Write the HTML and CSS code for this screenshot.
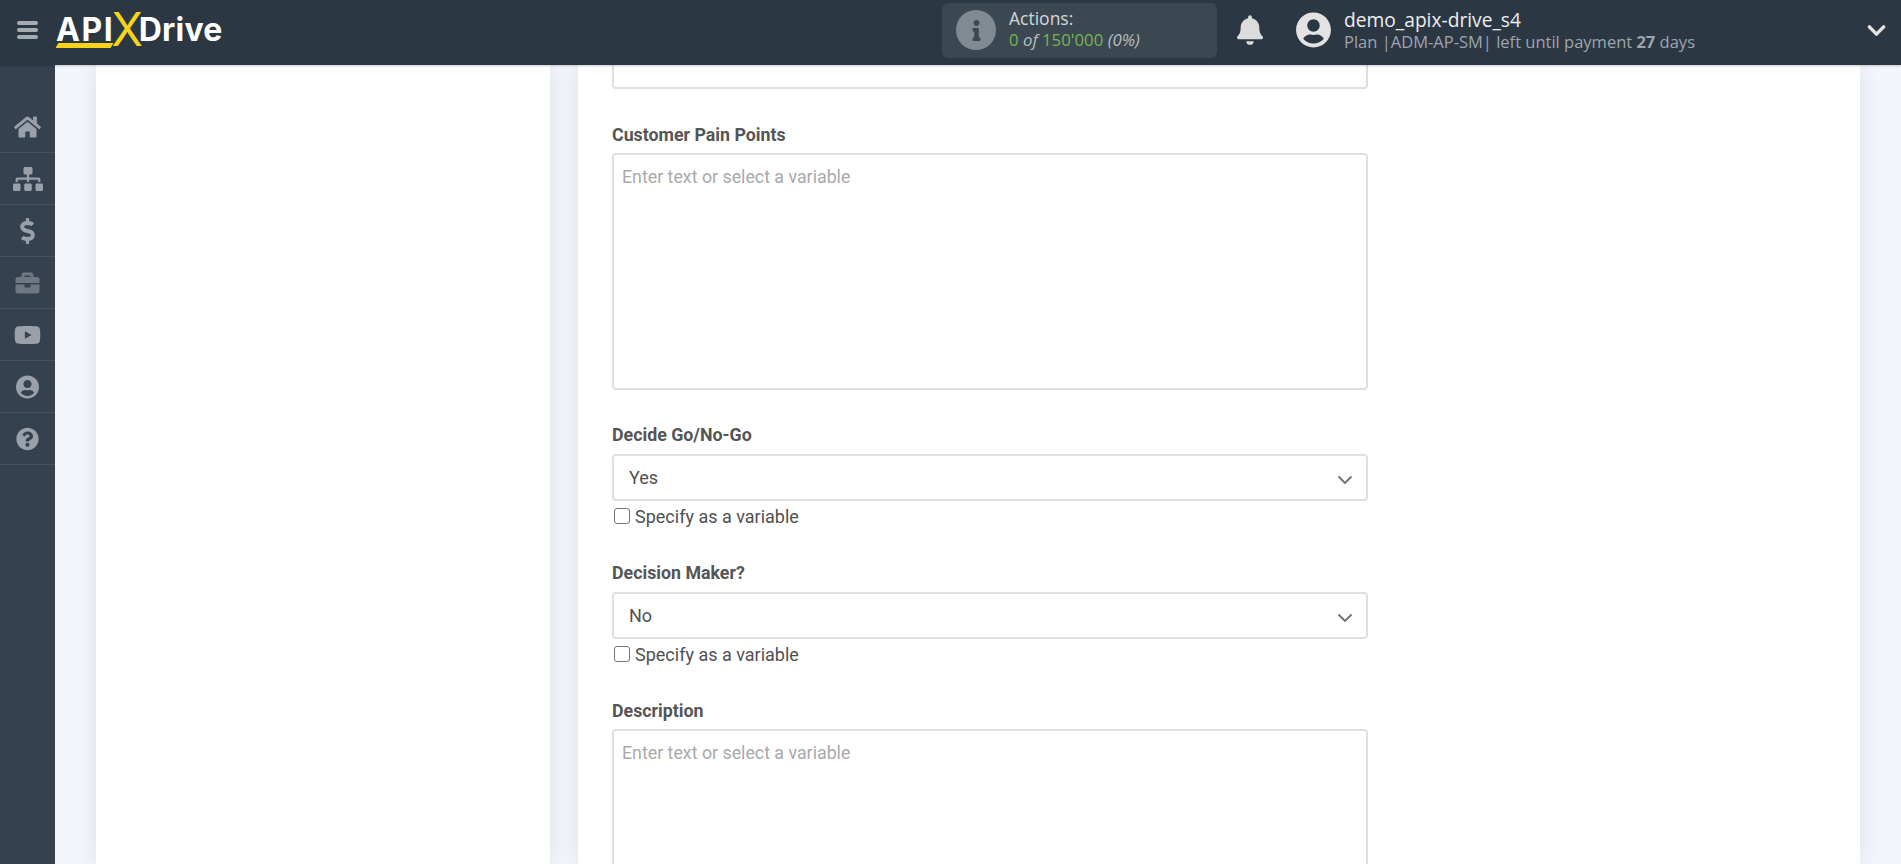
FILE: index.html
```html
<!DOCTYPE html>
<html lang="en">
<head>
  <meta charset="UTF-8">
  <title>ApiX-Drive</title>
  <link rel="stylesheet" href="styles.css">
</head>
<body>

  <header class="topbar">
    <div class="burger"><span></span><span></span><span></span></div>
    <div class="logo"><span class="logo-api">API</span><span class="logo-x">X</span><span>Drive</span></div>

    <div class="actions">
      <div class="actions-icon">
        <svg viewBox="0 0 192 512"><path d="M20 424.229h20V279.771H20c-11.046 0-20-8.954-20-20V212c0-11.046 8.954-20 20-20h112c11.046 0 20 8.954 20 20v212.229h20c11.046 0 20 8.954 20 20V492c0 11.046-8.954 20-20 20H20c-11.046 0-20-8.954-20-20v-47.771c0-11.046 8.954-20 20-20zM96 0C56.235 0 24 32.235 24 72s32.235 72 72 72 72-32.235 72-72S135.764 0 96 0z"/></svg>
      </div>
      <div class="actions-text">
        <div>Actions:</div>
        <div class="actions-count"><span class="green">0</span> <em>of</em> <span class="green">150'000</span> <em>(0%)</em></div>
      </div>
    </div>

    <svg class="bell" viewBox="0 0 448 512"><path d="M224 512c35.32 0 63.97-28.65 63.97-64H160.03c0 35.35 28.65 64 63.97 64zm215.39-149.71c-19.32-20.76-55.47-51.99-55.47-154.29 0-77.7-54.48-139.9-127.94-155.16V32c0-17.67-14.32-32-31.98-32s-31.98 14.33-31.98 32v20.84C118.56 68.1 64.08 130.3 64.08 208c0 102.3-36.15 133.53-55.47 154.29-6 6.45-8.66 14.16-8.61 21.71.11 16.4 12.98 32 32.1 32h383.8c19.12 0 32-15.6 32.1-32 .05-7.55-2.61-15.27-8.61-21.71z"/></svg>

    <svg class="avatar" viewBox="0 0 496 512"><path d="M248 8C111 8 0 119 0 256s111 248 248 248 248-111 248-248S385 8 248 8zm0 96c48.6 0 88 39.4 88 88s-39.4 88-88 88-88-39.4-88-88 39.4-88 88-88zm0 344c-58.7 0-111.3-26.6-146.5-68.2 18.8-35.4 55.6-59.8 98.5-59.8 2.4 0 4.8.4 7.1 1.1 13 4.2 26.6 6.9 40.9 6.9 14.3 0 28-2.7 40.9-6.9 2.3-.7 4.7-1.1 7.1-1.1 42.9 0 79.7 24.4 98.5 59.8C359.3 421.4 306.7 448 248 448z"/></svg>

    <div class="user">
      <div class="user-name">demo_apix-drive_s4</div>
      <div class="user-plan">Plan |ADM-AP-SM| left until payment <strong>27</strong> days</div>
    </div>

    <svg class="user-arrow" viewBox="0 0 448 512"><path d="M207.029 381.476L12.686 187.132c-9.373-9.373-9.373-24.569 0-33.941l22.667-22.667c9.357-9.357 24.522-9.375 33.901-.04L224 284.505l154.745-154.021c9.379-9.335 24.544-9.317 33.901.04l22.667 22.667c9.373 9.373 9.373 24.569 0 33.941L240.971 381.476c-9.373 9.372-24.569 9.372-33.942 0z"/></svg>
  </header>

  <div class="page">
    <nav class="sidebar">
      <a class="nav-item"><svg class="icon-home" viewBox="0 0 576 512"><path d="M280.37 148.26L96 300.11V464a16 16 0 0 0 16 16l112.06-.29a16 16 0 0 0 15.92-16V368a16 16 0 0 1 16-16h64a16 16 0 0 1 16 16v95.64a16 16 0 0 0 16 16.05L464 480a16 16 0 0 0 16-16V300L295.67 148.26a12.19 12.19 0 0 0-15.3 0zM571.6 251.47L488 182.56V44.05a12 12 0 0 0-12-12h-56a12 12 0 0 0-12 12v72.61L318.47 43a48 48 0 0 0-61 0L4.34 251.47a12 12 0 0 0-1.6 16.9l25.5 31A12 12 0 0 0 45.15 301l235.22-193.74a12.19 12.19 0 0 1 15.3 0L530.9 301a12 12 0 0 0 16.9-1.6l25.5-31a12 12 0 0 0-1.7-16.93z"/></svg></a>
      <a class="nav-item"><svg class="icon-map" viewBox="0 0 640 512"><path d="M128 352H32c-17.67 0-32 14.33-32 32v96c0 17.67 14.33 32 32 32h96c17.67 0 32-14.33 32-32v-96c0-17.67-14.33-32-32-32zm-24-80h192v48h48v-48h192v48h48v-57.59c0-21.17-17.23-38.41-38.41-38.41H344v-64h40c17.67 0 32-14.33 32-32V32c0-17.67-14.33-32-32-32H256c-17.67 0-32 14.33-32 32v96c0 17.67 14.33 32 32 32h40v64H94.41C73.23 224 56 241.23 56 262.41V320h48v-48zm264 80h-96c-17.67 0-32 14.33-32 32v96c0 17.67 14.33 32 32 32h96c17.67 0 32-14.33 32-32v-96c0-17.67-14.33-32-32-32zm240 0h-96c-17.67 0-32 14.33-32 32v96c0 17.67 14.33 32 32 32h96c17.67 0 32-14.33 32-32v-96c0-17.67-14.33-32-32-32z"/></svg></a>
      <a class="nav-item"><svg class="icon-dollar" viewBox="0 0 288 512"><path d="M209.2 233.4l-108-31.6C88.7 198.2 80 186.5 80 173.5c0-16.3 13.2-29.5 29.5-29.5h66.3c12.2 0 24.2 3.7 34.2 10.5 6.1 4.1 14.3 3.1 19.5-2l34.8-34c7.1-6.9 6.1-18.4-1.8-24.5C238 74.8 207.4 64.1 176 64V16c0-8.8-7.2-16-16-16h-32c-8.8 0-16 7.2-16 16v48h-2.5C45.8 64-5.4 118.7.5 183.6c4.2 46.1 39.4 83.6 83.8 96.6l102.5 30c12.5 3.7 21.2 15.3 21.2 28.3 0 16.3-13.2 29.5-29.5 29.5h-66.3C100 368 88 364.3 78 357.5c-6.1-4.1-14.3-3.1-19.5 2l-34.8 34c-7.1 6.9-6.1 18.4 1.8 24.5 24.5 19.2 55.1 29.9 86.5 30v48c0 8.8 7.2 16 16 16h32c8.8 0 16-7.2 16-16v-48.2c46.6-.9 90.3-28.6 105.7-72.7 21.5-61.6-14.6-124.8-72.5-141.7z"/></svg></a>
      <a class="nav-item dim"><svg class="icon-home" viewBox="0 0 512 512"><path d="M320 336c0 8.84-7.16 16-16 16h-96c-8.84 0-16-7.16-16-16v-48H0v144c0 25.6 22.4 48 48 48h416c25.6 0 48-22.4 48-48V288H320v48zm144-208h-80V80c0-25.6-22.4-48-48-48H176c-25.6 0-48 22.4-48 48v48H48c-25.6 0-48 22.4-48 48v80h512v-80c0-25.6-22.4-48-48-48zm-144 0H192V96h128v32z"/></svg></a>
      <a class="nav-item"><svg class="icon-home" viewBox="0 0 576 512"><path d="M549.655 124.083c-6.281-23.65-24.787-42.276-48.284-48.597C458.781 64 288 64 288 64S117.22 64 74.629 75.486c-23.497 6.322-42.003 24.947-48.284 48.597-11.412 42.867-11.412 132.305-11.412 132.305s0 89.438 11.412 132.305c6.281 23.65 24.787 41.5 48.284 47.821C117.22 448 288 448 288 448s170.78 0 213.371-11.486c23.497-6.321 42.003-24.171 48.284-47.821 11.412-42.867 11.412-132.305 11.412-132.305s0-89.438-11.412-132.305zm-317.51 213.508V175.185l142.739 81.205-142.739 81.201z"/></svg></a>
      <a class="nav-item"><svg class="icon-round" viewBox="0 0 496 512"><path d="M248 8C111 8 0 119 0 256s111 248 248 248 248-111 248-248S385 8 248 8zm0 96c48.6 0 88 39.4 88 88s-39.4 88-88 88-88-39.4-88-88 39.4-88 88-88zm0 344c-58.7 0-111.3-26.6-146.5-68.2 18.8-35.4 55.6-59.8 98.5-59.8 2.4 0 4.8.4 7.1 1.1 13 4.2 26.6 6.9 40.9 6.9 14.3 0 28-2.7 40.9-6.9 2.3-.7 4.7-1.1 7.1-1.1 42.9 0 79.7 24.4 98.5 59.8C359.3 421.4 306.7 448 248 448z"/></svg></a>
      <a class="nav-item"><svg class="icon-round" viewBox="0 0 512 512"><path d="M504 256c0 136.997-111.043 248-248 248S8 392.997 8 256C8 119.083 119.043 8 256 8s248 111.083 248 248zM262.655 90c-54.497 0-89.255 22.957-116.549 63.758-3.536 5.286-2.353 12.415 2.715 16.258l34.699 26.31c5.205 3.947 12.621 3.008 16.665-2.122 17.864-22.658 30.113-35.797 57.303-35.797 20.429 0 45.698 13.148 45.698 32.958 0 14.976-12.363 22.667-32.534 33.976C247.128 238.528 216 254.941 216 296v4c0 6.627 5.373 12 12 12h56c6.627 0 12-5.373 12-12v-1.333c0-28.462 83.186-29.647 83.186-106.667 0-58.002-60.165-102-116.531-102zM256 338c-25.365 0-46 20.635-46 46 0 25.364 20.635 46 46 46s46-20.636 46-46c0-25.365-20.635-46-46-46z"/></svg></a>
    </nav>

    <main class="content">
      <aside class="steps"></aside>

      <section class="form-card">
        <div class="field-stub"></div>

        <div class="field">
          <label class="field-label">Customer Pain Points</label>
          <textarea class="text-box" placeholder="Enter text or select a variable"></textarea>
        </div>

        <div class="field">
          <label class="field-label">Decide Go/No-Go</label>
          <div class="select-wrap">
            <select class="select-box"><option>Yes</option></select>
            <svg class="select-arrow" viewBox="0 0 16 10"><path d="M1.5 1.5 8 8l6.5-6.5"/></svg>
          </div>
          <label class="check-row"><input type="checkbox"> Specify as a variable</label>
        </div>

        <div class="field">
          <label class="field-label">Decision Maker?</label>
          <div class="select-wrap">
            <select class="select-box"><option>No</option></select>
            <svg class="select-arrow" viewBox="0 0 16 10"><path d="M1.5 1.5 8 8l6.5-6.5"/></svg>
          </div>
          <label class="check-row"><input type="checkbox"> Specify as a variable</label>
        </div>

        <div class="field">
          <label class="field-label">Description</label>
          <textarea class="text-box" placeholder="Enter text or select a variable"></textarea>
        </div>
      </section>
    </main>
  </div>

</body>
</html>
```

FILE: styles.css
```css
* {
  box-sizing: border-box;
}

body {
  margin: 0;
  height: 100vh;
  overflow: hidden;
  display: flex;
  flex-direction: column;
  background-color: #f2f6fc;
  font-family: Roboto, sans-serif;
}

/* top bar */
.topbar {
  height: 65px;
  flex-shrink: 0;
  padding-bottom: 5px;
  display: flex;
  align-items: center;
  background-color: #2c3744;
  box-shadow: 0 1px 2px rgba(0, 0, 0, .2);
  position: relative;
  z-index: 2;
  font-family: "Open Sans", sans-serif;
}

.burger {
  width: 21px;
  margin-left: 17px;
  display: flex;
  flex-direction: column;
  gap: 3px;
}

.burger span {
  height: 4px;
  border-radius: 2px;
  background-color: #a6abb2;
}

.logo {
  position: relative;
  display: flex;
  align-items: center;
  height: 56px;
  margin-left: 18px;
  margin-top: -2px;
  width: 170px;
  color: white;
  font-family: Inter, sans-serif;
  font-weight: 700;
  font-size: 32px;
  letter-spacing: .2px;
}

.logo::after {
  content: "";
  position: absolute;
  left: 1px;
  bottom: 9px;
  width: 55px;
  height: 5px;
  background-color: #f7d31a;
  transform: skewX(-30deg);
}

.logo-api {
  letter-spacing: 1.6px;
}

.logo-x {
  color: #f7d31a;
  font-size: 46px;
  font-weight: 400;
  line-height: 56px;
  letter-spacing: 0;
  margin: 0 -4px 0 -3px;
}

.actions {
  width: 275px;
  height: 55px;
  margin-left: 716px;
  padding-left: 14px;
  display: flex;
  align-items: center;
  gap: 13px;
  border-radius: 6px;
  background-color: #3b4852;
}

.actions-icon {
  width: 40px;
  height: 40px;
  border-radius: 50%;
  background-color: #818a91;
  display: flex;
  align-items: center;
  justify-content: center;
}

.actions-icon svg {
  width: 9px;
  height: 21px;
  fill: #3b4852;
}

.actions-text {
  padding-bottom: 2px;
  color: #d5d8da;
  font-size: 17.5px;
  line-height: 22px;
}

.actions-count {
  font-size: 16.8px;
  color: #b8bec2;
}

.green {
  color: #7ab353;
}

.bell {
  width: 26px;
  height: 30px;
  margin-left: 20px;
  fill: #dcdcdc;
}

.avatar {
  width: 35px;
  height: 36px;
  margin-left: 33px;
  fill: #e3e3e3;
}

.user {
  margin-left: 13px;
  margin-top: 1px;
  line-height: 22px;
}

.user-name {
  color: #eceef0;
  font-size: 19.2px;
}

.user-plan {
  color: #9ea5ac;
  font-size: 16.5px;
}

.user-plan strong {
  font-weight: 700;
}

.user-arrow {
  width: 19px;
  height: 21px;
  margin-left: auto;
  margin-right: 15px;
  fill: #e3e3e3;
}

/* sidebar and page body */
.page {
  flex: 1;
  display: flex;
  min-height: 0;
}

.sidebar {
  width: 55px;
  flex-shrink: 0;
  padding-top: 36px;
  background-color: #364150;
}

.nav-item {
  height: 52px;
  display: flex;
  align-items: center;
  justify-content: center;
  border-bottom: 1px solid #475261;
}

.nav-item svg {
  fill: #9aa0a9;
}

.nav-item.dim svg {
  fill: #6f7783;
}

.icon-home {
  width: 27px;
  height: 24px;
}

.icon-map {
  width: 30px;
  height: 24px;
}

.icon-dollar {
  width: 15px;
  height: 26px;
}

.icon-round {
  width: 23px;
  height: 24px;
}

.content {
  flex: 1;
  min-width: 0;
  display: flex;
  gap: 28px;
  padding: 0 41px;
}

.steps {
  width: 454px;
  flex-shrink: 0;
  background: white;
  box-shadow: 0 0 20px rgba(0, 0, 0, .09);
}

.form-card {
  flex: 1;
  padding: 0 34px;
  background: white;
  box-shadow: 0 0 20px rgba(0, 0, 0, .09);
}

/* form */
.field-stub {
  width: 756px;
  height: 24px;
  margin-bottom: 36px;
  border: 2px solid #dfdfdf;
  border-top: none;
  border-radius: 0 0 4px 4px;
}

.field {
  width: 756px;
  margin-top: 35px;
}

.field-stub + .field {
  margin-top: 0;
}

.field-label {
  display: block;
  height: 20px;
  margin-bottom: 8px;
  color: #555;
  font-size: 17.8px;
  font-weight: 700;
  line-height: 20px;
}

.text-box {
  display: block;
  width: 100%;
  height: 237px;
  padding: 12px 8px;
  border: 2px solid #dfdfdf;
  border-radius: 4px;
  outline: none;
  resize: none;
  font-family: Roboto, sans-serif;
  font-size: 17.8px;
  line-height: 20px;
  color: #505050;
}

.text-box::placeholder {
  color: #a9a9a9;
  opacity: 1;
}

.select-wrap {
  position: relative;
  margin-top: 9px;
}

.select-box {
  display: block;
  width: 100%;
  height: 47px;
  padding: 0 15px;
  border: 2px solid #dfdfdf;
  border-radius: 4px;
  outline: none;
  appearance: none;
  background: white;
  font-family: Roboto, sans-serif;
  font-size: 18px;
  color: #505050;
}

.select-arrow {
  position: absolute;
  right: 15px;
  top: 21px;
  width: 16px;
  height: 10px;
  fill: none;
  stroke: #6f6f6f;
  stroke-width: 1.8;
}

.check-row {
  display: flex;
  align-items: center;
  gap: 5px;
  height: 22px;
  margin-top: 5px;
  padding-bottom: 2px;
  color: #505050;
  font-size: 18px;
}

.check-row input {
  appearance: none;
  width: 16px;
  height: 16px;
  margin: 0 0 0 2px;
  background: white;
  border: 1px solid #767676;
  border-radius: 3px;
}
```
